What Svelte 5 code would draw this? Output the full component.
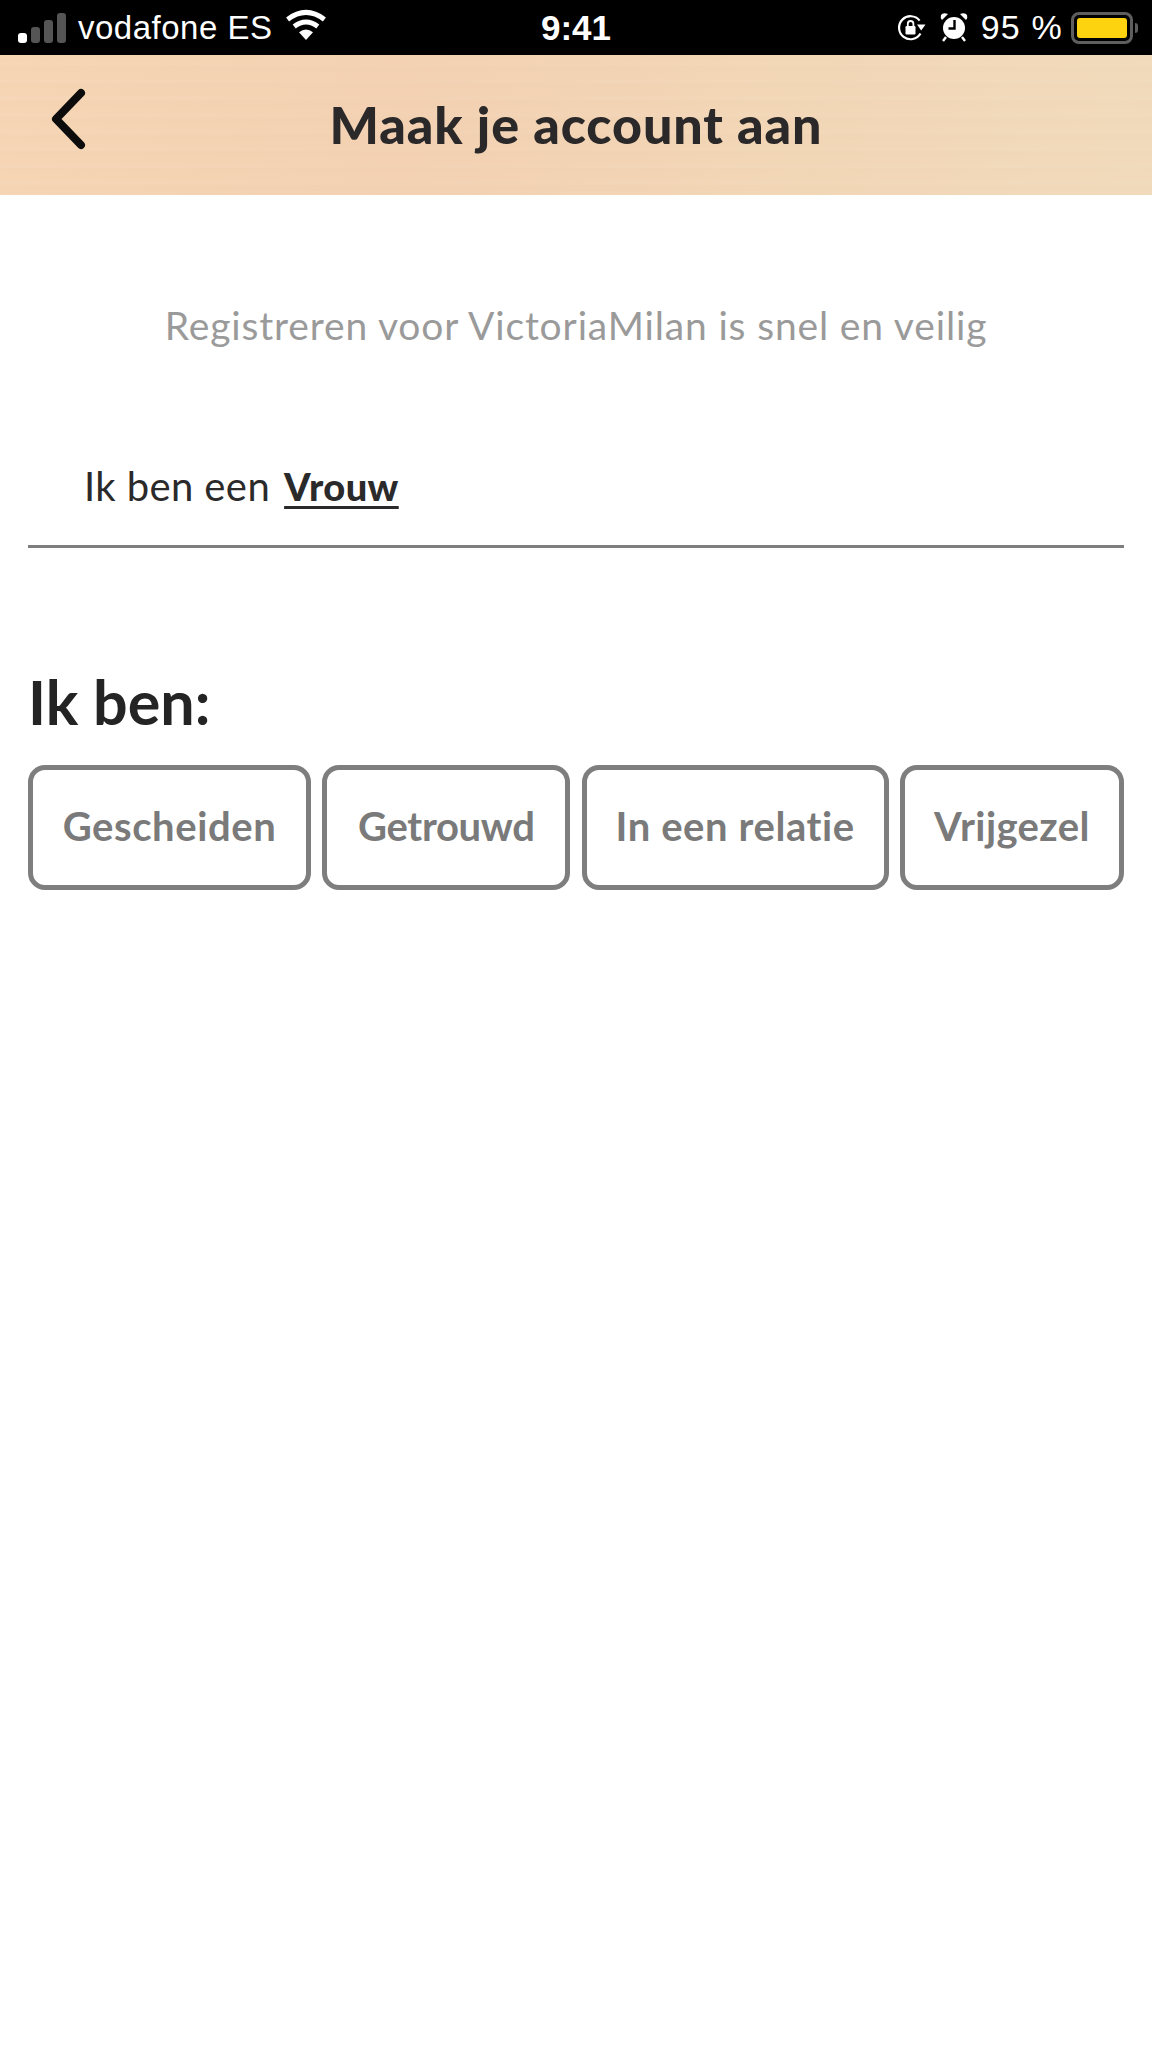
<script>
  const options = ['Gescheiden', 'Getrouwd', 'In een relatie', 'Vrijgezel'];
</script>

<div class="page">
  <div class="status">
    <div class="left">
      <div class="signal"><i class="on"></i><i></i><i></i><i></i></div>
      <span class="carrier">vodafone ES</span>
      <svg class="wifi" viewBox="0 0 42 32" width="42" height="32">
        <path d="M21 31 L14 23.2 Q21 18 28 23.2 Z" fill="#fff"/>
        <path d="M9.2 17.4 Q21 8.6 32.8 17.4" fill="none" stroke="#fff" stroke-width="5"/>
        <path d="M2.6 10.4 Q21 -3.6 39.4 10.4" fill="none" stroke="#fff" stroke-width="5"/>
      </svg>
    </div>
    <span class="time">9:41</span>
    <div class="right">
      <svg class="lock" viewBox="0 0 30 30" width="30" height="30">
        <path d="M24.5 20.5 A11.5 11.5 0 1 1 23.6 7.6" fill="none" stroke="#fff" stroke-width="2.2"/>
        <path d="M21 11.5 H29.5 L25.2 17.5 Z" fill="#fff"/>
        <rect x="9.5" y="13" width="10" height="8.5" rx="1.2" fill="#fff"/>
        <path d="M11.8 13 V10.8 a2.8 2.8 0 0 1 5.6 0 V13" fill="none" stroke="#fff" stroke-width="1.8"/>
      </svg>
      <svg class="alarm" viewBox="0 0 28 32" width="28" height="32">
        <circle cx="14" cy="17" r="11" fill="#fff"/>
        <path d="M14.5 9 V17.5 H8.5" fill="none" stroke="#000" stroke-width="2.4"/>
        <path d="M2 9 L8 3 Q3 1 1 4 Q0 7 2 9 Z M26 9 L20 3 Q25 1 27 4 Q28 7 26 9 Z" fill="#fff"/>
        <path d="M6 26 L3 30 M22 26 L25 30" stroke="#fff" stroke-width="2.4"/>
      </svg>
      <span class="pct">95 %</span>
      <div class="battery"><div class="fill"></div></div>
      <div class="nub"></div>
    </div>
  </div>

  <header class="nav">
    <svg class="back" viewBox="0 0 36 62" width="36" height="62">
      <path d="M31 5 L6 31 L31 57" fill="none" stroke="#0c0c0c" stroke-width="8" stroke-linecap="round" stroke-linejoin="round"/>
    </svg>
    <h1>Maak je account aan</h1>
  </header>

  <main>
    <p class="sub">Registreren voor VictoriaMilan is snel en veilig</p>
    <div class="gender">
      <span>Ik ben een</span>
      <strong>Vrouw</strong>
    </div>
    <h2>Ik ben:</h2>
    <div class="chips">
      {#each options as o}
        <button type="button">{o}</button>
      {/each}
    </div>
  </main>
</div>

<style>
  :global(body) { margin: 0; background: #fff; }
  .page { width: 1152px; height: 2048px; background: #fff; font-family: Lato, "Open Sans", sans-serif; color: #2b2a2b; overflow: hidden; }

  .status { height: 55px; background: #000; color: #fff; display: flex; align-items: center; justify-content: space-between; position: relative; font-family: "Liberation Sans", Arial, sans-serif; font-size: 32px; padding: 0 14px 0 18px; box-sizing: border-box; }
  .left, .right { display: flex; align-items: center; }
  .signal { display: flex; align-items: flex-end; gap: 4px; height: 30px; margin-right: 12px; }
  .signal i { width: 9px; background: #555; border-radius: 3px; }
  .signal i:nth-child(1) { height: 10px; background: #fff; }
  .signal i:nth-child(2) { height: 16px; }
  .signal i:nth-child(3) { height: 23px; }
  .signal i:nth-child(4) { height: 30px; }
  .carrier { font-size: 33px; letter-spacing: 0.5px; }
  .wifi { margin-left: 13px; margin-top: -6px; }
  .time { position: absolute; left: 0; right: 0; text-align: center; font-size: 35px; font-weight: 700; pointer-events: none; }
  .lock { margin-right: 14px; }
  .alarm { margin-right: 13px; margin-top: -2px; }
  .pct { font-size: 34px; letter-spacing: 1.2px; margin-right: 8px; }
  .battery { width: 62px; height: 32px; box-sizing: border-box; border: 3px solid #5e5e5e; border-radius: 8px; padding: 3px; }
  .fill { height: 100%; background: #fdd20e; border-radius: 3px; }
  .nub { width: 3px; height: 10px; background: #5e5e5e; border-radius: 0 3px 3px 0; margin-left: 2px; }

  .nav { height: 140px; background: repeating-linear-gradient(180deg, rgba(255,255,255,0) 0 7px, rgba(255,255,255,0.03) 7px 11px, rgba(0,0,0,0.004) 11px 17px), linear-gradient(90deg, #f5d5b4 0%, #f3d1b2 35%, #f2d6b6 65%, #f1dabb 100%); position: relative; display: flex; align-items: center; justify-content: center; }
  .back { position: absolute; left: 50px; top: 33px; }
  h1 { margin: 0; font-size: 52px; font-weight: 900; color: #2b2829; position: relative; top: -1px; letter-spacing: 0.9px; }

  main { padding: 0 28px; }
  .sub { margin: 0; padding-top: 105px; text-align: center; font-size: 39px; line-height: 50px; color: #9a9a9a; letter-spacing: 0.85px; }
  .gender { margin-top: 111px; height: 84px; padding-left: 56px; border-bottom: 3px solid #7e7e7e; display: flex; align-items: flex-start; gap: 14px; font-size: 40px; line-height: 50px; letter-spacing: 0.4px; }
  .gender strong { font-size: 38px; font-weight: 900; text-decoration: underline; text-underline-offset: 5px; text-decoration-thickness: 3px; }
  h2 { margin: 0; padding-top: 119px; font-size: 61px; line-height: 70px; font-weight: 700; color: #252425; }
  .chips { display: flex; justify-content: space-between; margin-top: 28px; }
  button { height: 125px; box-sizing: border-box; background: #fff; border: 5px solid #7e7e7e; border-radius: 17px; font-family: inherit; font-size: 40px; font-weight: 700; color: #7a7a7a; padding: 0 0 4px; letter-spacing: 0.6px; }
  button:nth-child(1) { width: 283px; }
  button:nth-child(2) { width: 248px; letter-spacing: -0.3px; }
  button:nth-child(3) { width: 307px; }
  button:nth-child(4) { width: 224px; letter-spacing: 0.4px; }
</style>
